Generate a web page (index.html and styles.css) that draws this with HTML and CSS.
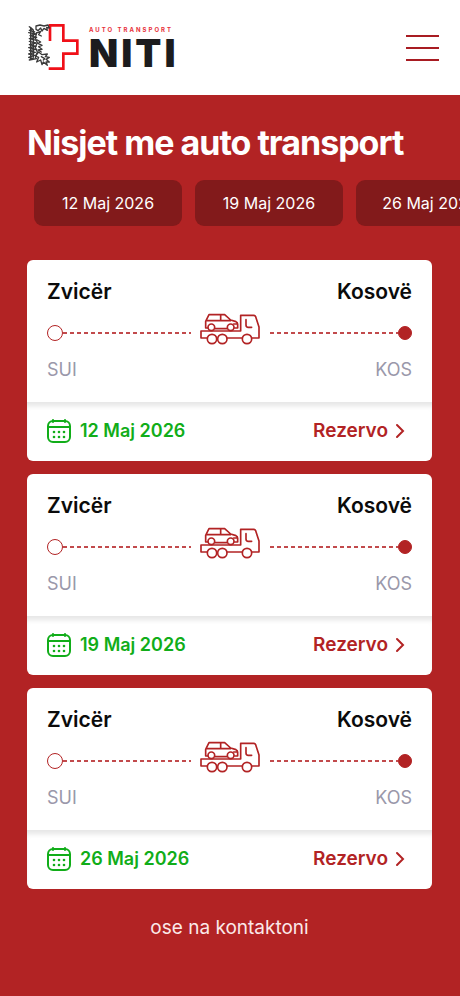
FILE: index.html
```html
<!DOCTYPE html>
<html lang="sq">
<head>
<meta charset="utf-8">
<meta name="viewport" content="width=device-width, initial-scale=1">
<title>Auto Transport NITI</title>
<link rel="stylesheet" href="styles.css">
</head>
<body>
<svg class="sprite" aria-hidden="true">
  <symbol id="truck" viewBox="30 28 180 96">
    <g fill="none" stroke="currentColor" stroke-width="5" stroke-linejoin="round" stroke-linecap="round">
      <path d="M51 103H33V82H152V35H191Q195 35 197 39L207 70V103H187M112 103H156"/>
      <circle cx="66" cy="106" r="14"/><circle cx="97" cy="106" r="14"/><circle cx="171" cy="106" r="14"/>
      <path d="M53 73H47V53L57 33H104L122 49L138 54Q143 56 143 62V73H134M76 75H110M50 51H121M92 34V50M131 61H142"/>
      <circle cx="64" cy="71" r="10"/><circle cx="122" cy="71" r="10"/>
      <path d="M168 48V64Q168 71 175 71H185"/>
    </g>
  </symbol>
  <symbol id="calendar" viewBox="0 0 24 24">
    <g fill="none" stroke="currentColor" stroke-width="2" stroke-linecap="round">
      <rect x="1" y="2" width="22" height="21" rx="5"/>
      <path d="M1 8H23M6 1V3M18 1V3"/>
    </g>
    <g fill="currentColor">
      <circle cx="7" cy="13" r="1.3"/><circle cx="12" cy="13" r="1.3"/><circle cx="17" cy="13" r="1.3"/>
      <circle cx="7" cy="18" r="1.3"/><circle cx="12" cy="18" r="1.3"/><circle cx="17" cy="18" r="1.3"/>
    </g>
  </symbol>
  <symbol id="chevron" viewBox="0 0 10 16">
    <path d="M2 2L8 8L2 14" fill="none" stroke="currentColor" stroke-width="2" stroke-linecap="round"/>
  </symbol>
</svg>

<header class="header">
  <a class="logo" href="#" aria-label="Auto Transport NITI">
    <svg class="logo-mark" viewBox="18 14 153 141" aria-hidden="true">
      <path d="M84 65V18H124V64H166V103H124V148H80" fill="none" stroke="#f01018" stroke-width="8"/>
      <g fill="none" stroke="#3a3a3a" stroke-width="4" stroke-linecap="round" stroke-linejoin="round">
        <path d="M22 22L32 30L22 33L38 38M20 40L42 44L24 49L44 54L22 58L44 63M22 66L42 71L22 76L42 81L20 85L42 90L22 94L40 99L20 104L38 108L20 114L34 118L22 122L44 118"/>
        <path d="M26 24V118M34 32V114M44 40L40 56L46 70L40 84L46 98L40 116"/>
        <path d="M42 20L54 17L66 20L78 17L82 26L74 24L76 33L66 27L60 35L56 26L48 34L42 30Z"/>
        <path d="M46 40L56 36L50 46L58 50M46 62L56 68L48 72L60 78L50 82L60 90L48 92L58 98"/>
        <path d="M50 98L60 106L76 104L70 112L82 114L72 120L82 128L72 128L76 138L64 128L60 136L56 122L44 128L50 114L40 110Z"/>
        <path d="M58 112L68 118L64 122"/>
      </g>
    </svg>
    <span class="logo-text"><span class="logo-small">AUTO TRANSPORT</span><span class="logo-name">NITI</span></span>
  </a>
  <button class="menu" type="button" aria-label="Menu"><span></span><span></span><span></span></button>
</header>

<main class="main">
  <h1 class="title">Nisjet me auto transport</h1>
  <div class="dates">
    <button class="date" type="button">12 Maj 2026</button>
    <button class="date" type="button">19 Maj 2026</button>
    <button class="date" type="button">26 Maj 2026</button>
  </div>

  <div class="cards">
    <article class="card">
      <div class="trip">
        <div class="row cities"><span>Zvicër</span><span>Kosovë</span></div>
        <div class="route"><i class="stop"></i><i class="line"></i><svg class="truck" aria-hidden="true"><use href="#truck"/></svg><i class="line"></i><i class="stop end"></i></div>
        <div class="row codes"><span>SUI</span><span>KOS</span></div>
      </div>
      <div class="row foot">
        <span class="day"><svg class="calendar" aria-hidden="true"><use href="#calendar"/></svg>12 Maj 2026</span>
        <a class="book" href="#">Rezervo<svg class="chevron" aria-hidden="true"><use href="#chevron"/></svg></a>
      </div>
    </article>
    <article class="card">
      <div class="trip">
        <div class="row cities"><span>Zvicër</span><span>Kosovë</span></div>
        <div class="route"><i class="stop"></i><i class="line"></i><svg class="truck" aria-hidden="true"><use href="#truck"/></svg><i class="line"></i><i class="stop end"></i></div>
        <div class="row codes"><span>SUI</span><span>KOS</span></div>
      </div>
      <div class="row foot">
        <span class="day"><svg class="calendar" aria-hidden="true"><use href="#calendar"/></svg>19 Maj 2026</span>
        <a class="book" href="#">Rezervo<svg class="chevron" aria-hidden="true"><use href="#chevron"/></svg></a>
      </div>
    </article>
    <article class="card">
      <div class="trip">
        <div class="row cities"><span>Zvicër</span><span>Kosovë</span></div>
        <div class="route"><i class="stop"></i><i class="line"></i><svg class="truck" aria-hidden="true"><use href="#truck"/></svg><i class="line"></i><i class="stop end"></i></div>
        <div class="row codes"><span>SUI</span><span>KOS</span></div>
      </div>
      <div class="row foot">
        <span class="day"><svg class="calendar" aria-hidden="true"><use href="#calendar"/></svg>26 Maj 2026</span>
        <a class="book" href="#">Rezervo<svg class="chevron" aria-hidden="true"><use href="#chevron"/></svg></a>
      </div>
    </article>
  </div>
  <p class="contact">ose na kontaktoni</p>
</main>
</body>
</html>
```
FILE: styles.css
```css
* { box-sizing: border-box; }

body {
  margin: 0;
  min-height: 100vh;
  background: #b22324;
  font-family: Inter, "Liberation Sans", sans-serif;
  overflow-x: hidden;
}

a { color: inherit; text-decoration: none; }
button { border: 0; font: inherit; cursor: pointer; }
.sprite { display: none; }

.header {
  display: flex;
  align-items: center;
  justify-content: space-between;
  padding: 24px 21px 24px 28px;
  background: #fff;
}

.logo { display: flex; align-items: center; gap: 10px; }
.logo-mark { width: 51px; height: 47px; }
.logo-text { display: flex; flex-direction: column; gap: 5px; padding-bottom: 3px; }
.logo-small {
  color: #e8313a;
  font-size: 6px;
  font-weight: 700;
  line-height: 8px;
  letter-spacing: 2px;
}
.logo-name {
  color: #1c1c1e;
  font-size: 38px;
  font-weight: 900;
  line-height: 28px;
  letter-spacing: 3px;
}

.menu {
  display: flex;
  flex-direction: column;
  gap: 10px;
  padding: 0;
  background: none;
}
.menu span { width: 33px; height: 2px; background: #a81c22; }

.main { padding: 28px 28px 54px 27px; }

.title {
  margin: 0 0 17px;
  color: #fff;
  font-size: 34px;
  font-weight: 700;
  line-height: 40px;
  letter-spacing: -1px;
  white-space: nowrap;
}

.dates {
  display: flex;
  gap: 13px;
  margin: 0 -28px 34px 0;
  padding-left: 7px;
  overflow: hidden;
}
.date {
  flex: 0 0 148px;
  height: 46px;
  border-radius: 9px;
  background: #821a1b;
  color: #fff;
  font-size: 16px;
}

.cards { display: flex; flex-direction: column; gap: 13px; }
.card {
  overflow: hidden;
  border-radius: 6px;
  background: #fff;
}
.trip { padding: 19px 20px 19px; }
.row { display: flex; align-items: center; justify-content: space-between; }
.cities { color: #0b0b0b; font-size: 21px; font-weight: 600; line-height: 26px; }

.route { display: flex; align-items: center; height: 32px; margin: 12px 0 8px; }
.stop {
  width: 16px;
  height: 16px;
  border: 1px solid #b22324;
  border-radius: 50%;
}
.end { width: 14px; height: 14px; background: #b22324; }
.line {
  flex: 1;
  height: 2px;
  background: repeating-linear-gradient(90deg, #c24a4c 0 4px, transparent 4px 7px);
}
.truck { width: 60px; height: 32px; margin: 0 10px 8px 9px; color: #b22324; }

.codes { color: #9a98aa; font-size: 18px; line-height: 26px; }

.foot {
  padding: 15px 27px 16px 20px;
  font-size: 19px;
  font-weight: 600;
  line-height: 28px;
  box-shadow: inset 0 6px 5px -2px #e6e6e6;
}
.day { display: flex; align-items: center; gap: 9px; color: #11ad19; font-size: 18px; }
.calendar { width: 24px; height: 24px; }
.book { display: flex; align-items: center; gap: 7px; color: #b22324; }
.chevron { width: 10px; height: 16px; }

.contact {
  margin: 25px 0 0;
  color: #fbe9e9;
  font-size: 19px;
  line-height: 28px;
  text-align: center;
}
```
